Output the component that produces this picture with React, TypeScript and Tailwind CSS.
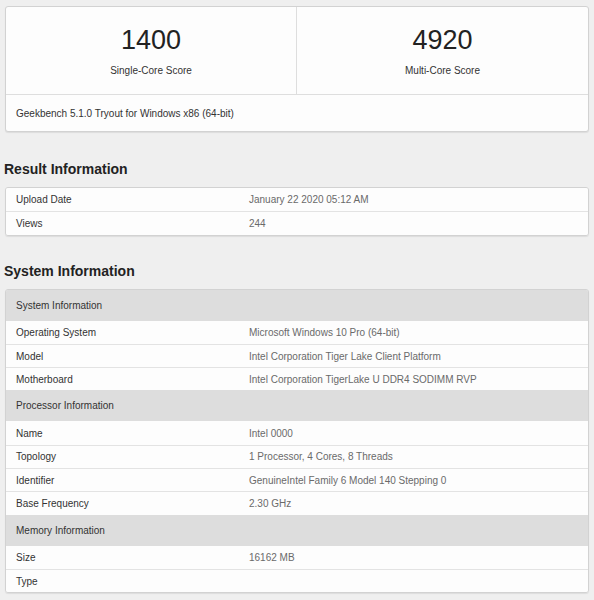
const systemRows: { header: string; rows: [string, string][] }[] = [
  {
    header: 'System Information',
    rows: [
      ['Operating System', 'Microsoft Windows 10 Pro (64-bit)'],
      ['Model', 'Intel Corporation Tiger Lake Client Platform'],
      ['Motherboard', 'Intel Corporation TigerLake U DDR4 SODIMM RVP'],
    ],
  },
  {
    header: 'Processor Information',
    rows: [
      ['Name', 'Intel 0000'],
      ['Topology', '1 Processor, 4 Cores, 8 Threads'],
      ['Identifier', 'GenuineIntel Family 6 Model 140 Stepping 0'],
      ['Base Frequency', '2.30 GHz'],
    ],
  },
  {
    header: 'Memory Information',
    rows: [
      ['Size', '16162 MB'],
      ['Type', ''],
    ],
  },
];

function Row({ label, value, first }: { label: string; value: string; first?: boolean }) {
  return (
    <div className={`flex h-[23.3px] items-center bg-[#fdfdfd] ${first ? '' : 'border-t border-[#e3e3e3]'}`}>
      <div className="w-[243px] shrink-0 pl-[10px] text-[#333]">{label}</div>
      <div className="text-[#6a6a6a]">{value}</div>
    </div>
  );
}

export default function App() {
  return (
    <div className="min-h-screen bg-[#efefef] px-[5px] pt-[6px] pb-4 font-['Liberation_Sans',Arial,sans-serif] text-[10px]">
      {/* Scores */}
      <div className="overflow-hidden rounded-[3px] border border-[#d2d2d2] bg-[#fdfdfd] shadow-[0_1px_1px_rgba(0,0,0,0.08)]">
        <div className="grid h-[87px] grid-cols-2">
          <div className="flex flex-col items-center border-r border-[#dedede] pt-[19px]">
            <div className="text-[27px] leading-[28px] text-[#222]">1400</div>
            <div className="mt-[10px] leading-[14px] text-[#333]">Single-Core Score</div>
          </div>
          <div className="flex flex-col items-center pt-[19px]">
            <div className="text-[27px] leading-[28px] text-[#222]">4920</div>
            <div className="mt-[10px] leading-[14px] text-[#333]">Multi-Core Score</div>
          </div>
        </div>
        <div className="flex h-[37px] items-center border-t border-[#dedede] pl-[10px] text-[#333]">
          Geekbench 5.1.0 Tryout for Windows x86 (64-bit)
        </div>
      </div>

      {/* Result Information */}
      <h2 className="mt-[27px] mb-[8px] -ml-px text-[14px] leading-[20px] font-bold text-[#222]">Result Information</h2>
      <div className="overflow-hidden rounded-[3px] border border-[#d2d2d2] shadow-[0_1px_1px_rgba(0,0,0,0.08)]">
        <Row label="Upload Date" value="January 22 2020 05:12 AM" first />
        <Row label="Views" value="244" />
      </div>

      {/* System Information */}
      <h2 className="mt-[25px] mb-[8px] -ml-px text-[14px] leading-[20px] font-bold text-[#222]">System Information</h2>
      <div className="overflow-hidden rounded-[3px] border border-[#d2d2d2] shadow-[0_1px_1px_rgba(0,0,0,0.08)]">
        {systemRows.map((section) => (
          <div key={section.header}>
            <div className="flex h-[31px] items-center bg-[#dddddd] pl-[10px] text-[#333]">{section.header}</div>
            {section.rows.map(([label, value], i) => (
              <Row key={label} label={label} value={value} first={i === 0} />
            ))}
          </div>
        ))}
      </div>
    </div>
  );
}
